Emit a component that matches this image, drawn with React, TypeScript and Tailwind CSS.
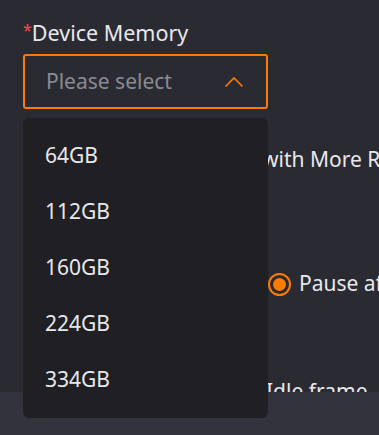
import React from "react";

export default function App() {
  const options = ["64GB", "112GB", "160GB", "224GB", "334GB"];
  return (
    <div
      className="relative w-[379px] h-[435px] overflow-hidden bg-[#2a2a33] text-[#e8e8ea] flex flex-col"
      style={{ fontFamily: '"Noto Sans", "Open Sans", sans-serif' }}
    >
      <div className="h-[392px] shrink-0 overflow-hidden flex flex-col pl-[23px]">
        <div className="shrink-0 mt-[18px] h-[30px] flex items-center text-[21.5px] leading-none">
          <span className="text-[#f5504f] text-[16px] self-start mt-[4px]">*</span>
          <span>Device Memory</span>
        </div>
        <div className="shrink-0 mt-[6px] w-[245px] h-[55px] rounded-[3px] border-2 border-[#ff7a00] flex items-center justify-between pl-[21px] pr-[22px]">
          <span className="text-[21px] text-[#8b8b92]">Please select</span>
          <svg width="20" height="12" viewBox="0 0 20 12" fill="none">
            <path d="M1.5 10.5 L10 2 L18.5 10.5" stroke="#ff7a00" strokeWidth="1.6" />
          </svg>
        </div>
        <div className="shrink-0 mt-[36px] flex items-center h-[30px] text-[21px] whitespace-nowrap">
          <span className="ml-[239px]">with More Resources</span>
        </div>
        <div className="shrink-0 mt-[94px] flex items-center h-[30px] text-[21px] whitespace-nowrap">
          <div className="ml-[245px] w-[23px] h-[23px] shrink-0 rounded-full border-2 border-[#ff7a00] flex items-center justify-center">
            <div className="w-[13px] h-[13px] rounded-full bg-[#ff7a00]" />
          </div>
          <span className="ml-[8px]">Pause after</span>
        </div>
        <div className="shrink-0 mt-[78px] flex items-center h-[30px] text-[21px] whitespace-nowrap">
          <span className="ml-[243px]">Idle frame</span>
        </div>
      </div>
      <div className="h-[43px] shrink-0 bg-[#33333e]" />

      <div className="absolute left-[23px] top-[118px] w-[245px] h-[300px] rounded-[6px] bg-[#1f1f24] py-[10px] flex flex-col">
        {options.map((o) => (
          <div key={o} className="h-[56px] shrink-0 flex items-center pl-[22px] text-[21px] text-[#e8e8ea]">
            {o}
          </div>
        ))}
      </div>
    </div>
  );
}
